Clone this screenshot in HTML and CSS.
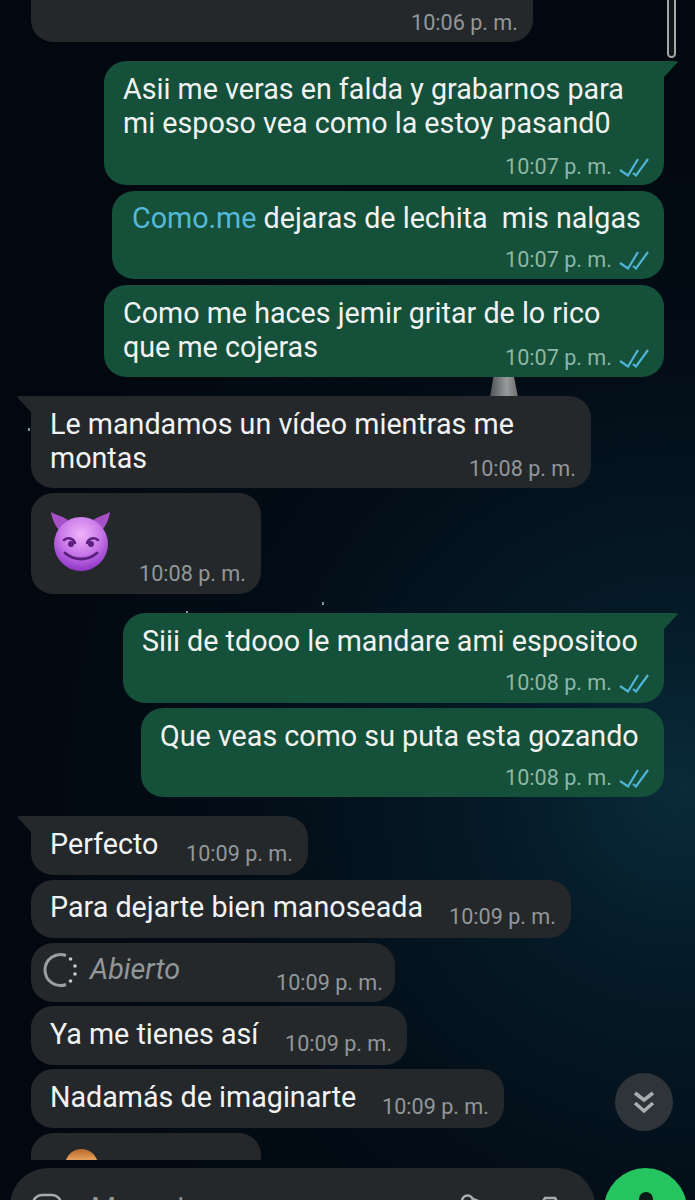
FILE: index.html
```html
<!DOCTYPE html>
<html lang="es">
<head>
    <meta charset="UTF-8">
    <meta name="viewport" content="width=device-width, initial-scale=1.0">
    <title>Chat</title>
    <link rel="stylesheet" href="styles.css">
</head>
<body>
    <!-- fondo -->
    <div class="moon"></div>
    <span class="star s1"></span>
    <span class="star s2"></span>
    <span class="star s3"></span>

    <div class="scroll-thumb"></div>

    <main class="chat">
        <div class="msg in cut w-502">
            <div class="meta">10:06 p. m.</div>
        </div>

        <div class="msg out tail group w-560 low-time">
            <p class="text">Asii me veras en falda y grabarnos para<br>mi esposo vea como la estoy pasand0</p>
            <div class="meta stacked">10:07 p. m. <svg class="ticks" viewBox="0 0 30 20"><path d="M1 13l8 5.500L19 2M14 16l3 2.500L29 2"/></svg></div>
        </div>
        <div class="msg out w-552 pad-20">
            <p class="text"><span class="link">Como.me</span> dejaras de lechita&nbsp; mis nalgas</p>
            <div class="meta stacked">10:07 p. m. <svg class="ticks" viewBox="0 0 30 20"><path d="M1 13l8 5.500L19 2M14 16l3 2.500L29 2"/></svg></div>
        </div>
        <div class="msg out w-560 short">
            <p class="text">Como me haces jemir gritar de lo rico<br>que me cojeras</p>
            <div class="meta overlap">10:07 p. m. <svg class="ticks" viewBox="0 0 30 20"><path d="M1 13l8 5.500L19 2M14 16l3 2.500L29 2"/></svg></div>
        </div>

        <div class="msg in tail group w-560 short">
            <p class="text">Le mandamos un vídeo mientras me<br>montas</p>
            <div class="meta overlap">10:08 p. m.</div>
        </div>
        <div class="msg in w-230 emoji-msg">
            <svg class="devil" viewBox="0 0 60 60">
                <defs>
                    <radialGradient id="face" cx="50%" cy="32%" r="68%">
                        <stop offset="0" stop-color="#f0b4fa"/>
                        <stop offset="0.55" stop-color="#c878e8"/>
                        <stop offset="1" stop-color="#8f35c8"/>
                    </radialGradient>
                </defs>
                <path d="M0 0c5 3 11 4 17 8l-8 11C4 14 1 7 0 0zM59 0c-5 3-11 4-17 8l8 11c5-5 8-12 9-19z" fill="#a650c8"/>
                <circle cx="30" cy="32" r="27" fill="url(#face)"/>
                <path d="M13 28c4-3 9-2 11 3M47 28c-4-3-9-2-11 3" fill="none" stroke="#5c1f80" stroke-width="2.500" stroke-linecap="round"/>
                <circle cx="20" cy="32" r="3" fill="#5c1f80"/>
                <circle cx="40" cy="32" r="3" fill="#5c1f80"/>
                <path d="M14 41c9 8 23 8 32 0" fill="none" stroke="#5c1f80" stroke-width="3" stroke-linecap="round"/>
            </svg>
            <div class="meta emoji-time">10:08 p. m.</div>
        </div>

        <div class="msg out tail group w-541">
            <p class="text">Siii de tdooo le mandare ami espositoo</p>
            <div class="meta stacked">10:08 p. m. <svg class="ticks" viewBox="0 0 30 20"><path d="M1 13l8 5.500L19 2M14 16l3 2.500L29 2"/></svg></div>
        </div>
        <div class="msg out w-523 close short">
            <p class="text">Que veas como su puta esta gozando</p>
            <div class="meta stacked">10:08 p. m. <svg class="ticks" viewBox="0 0 30 20"><path d="M1 13l8 5.500L19 2M14 16l3 2.500L29 2"/></svg></div>
        </div>

        <div class="msg in tail group row w-277">
            <p class="text">Perfecto</p>
            <div class="meta">10:09 p. m.</div>
        </div>
        <div class="msg in row w-540 h-58">
            <p class="text">Para dejarte bien manoseada</p>
            <div class="meta">10:09 p. m.</div>
        </div>
        <div class="msg in row w-364 once">
            <svg class="once-icon" viewBox="0 0 36 36">
                <path d="M24 3.500A15.500 15.500 0 1 0 24 32.500" fill="none" stroke="#9a9fa2" stroke-width="3"/>
                <circle cx="28.500" cy="7" r="1.800" fill="#c8cbcd"/>
                <circle cx="33" cy="14" r="1.800" fill="#c8cbcd"/>
                <circle cx="33" cy="22" r="1.800" fill="#c8cbcd"/>
                <circle cx="28.500" cy="29" r="1.800" fill="#c8cbcd"/>
            </svg>
            <p class="text opened">Abierto</p>
            <div class="meta">10:09 p. m.</div>
        </div>
        <div class="msg in row tight w-376">
            <p class="text">Ya me tienes así</p>
            <div class="meta">10:09 p. m.</div>
        </div>
        <div class="msg in row tight w-473">
            <p class="text">Nadamás de imaginarte</p>
            <div class="meta">10:09 p. m.</div>
        </div>
        <div class="msg in w-230 peek">
            <div class="peek-emoji"></div>
        </div>
    </main>

    <button class="to-bottom">
        <svg viewBox="0 0 22 24"><path d="M2 3l9 7 9-7M2 13l9 8 9-8"/></svg>
    </button>

    <footer class="bar">
        <div class="composer">
            <svg class="bar-icon smile" viewBox="0 0 32 32"><rect x="2" y="2" width="28" height="28" rx="9"/></svg>
            <span class="placeholder">Mensaje</span>
            <svg class="bar-icon clip" viewBox="0 0 24 32"><path d="M5 24L6 8a5.500 5.500 0 0 1 11 0l-1 16M17 6l5 2"/></svg>
            <svg class="bar-icon camera" viewBox="0 0 36 30"><path d="M2 8h8l3-5h10l3 5h8v20H2z"/></svg>
        </div>
        <div class="mic">
            <span class="mic-head"></span>
        </div>
    </footer>
</body>
</html>
```

FILE: styles.css
```css
* {
    margin: 0;
    padding: 0;
    box-sizing: border-box;
}

html, body {
    height: 1200px;
    overflow: hidden;
}

body {
    position: relative;
    font-family: Roboto, Arial, sans-serif;
    color: #f1f3f2;
    background: radial-gradient(circle at 680px 790px, #0a2b3a 0, #051b28 170px, #030d17 430px, #02080f 700px);
}

/* estrellas y luna del fondo */
.moon {
    position: absolute;
    left: 490px;
    top: 377px;
    width: 28px;
    height: 20px;
    background: linear-gradient(to right, #505356, #989a9b 60%, #6a6c6e);
    clip-path: polygon(12% 0, 86% 0, 100% 100%, 0 100%);
}

.star {
    position: absolute;
    width: 2px;
    height: 3px;
    background: #7f99a4;
}

.s1 { left: 28px; top: 428px; }
.s2 { left: 322px; top: 602px; }
.s3 { left: 186px; top: 611px; width: 2px; height: 2px; }

.scroll-thumb {
    position: absolute;
    left: 667px;
    top: -6px;
    width: 9px;
    height: 64px;
    border: 2px solid #a5a8aa;
    border-radius: 5px;
    background: #11161a;
}

.chat {
    display: flex;
    flex-direction: column;
    height: 1160px;
    overflow: hidden;
}

.msg {
    position: relative;
    flex-shrink: 0;
    margin-top: 5px;
    padding: 11px 23px 8px 19px;
    border-radius: 22px;
}

.in {
    align-self: flex-start;
    margin-left: 31px;
    background: #24282b;
}

.out {
    align-self: flex-end;
    margin-right: 31px;
    background: #15503a;
}

.out + .out {
    margin-top: 6px;
}

.out + .out.close {
    margin-top: 5px;
}

.msg.group {
    margin-top: 19px;
}

.msg.tight {
    margin-top: 4px;
}

.short {
    padding-bottom: 7px;
}

.cut {
    height: 42px;
    margin-top: 0;
    padding: 11px 15px 0 0;
    border-radius: 0 0 22px 22px;
}

/* colita de la burbuja */
.tail.out {
    border-top-right-radius: 0;
}

.tail.in {
    border-top-left-radius: 0;
}

.tail::after {
    content: "";
    position: absolute;
    top: 0;
    width: 14px;
    height: 16px;
    background: inherit;
}

.tail.out::after {
    left: 100%;
    clip-path: polygon(0 0, 85% 0, 100% 6%, 0 100%);
}

.tail.in::after {
    right: 100%;
    clip-path: polygon(100% 0, 15% 0, 0 6%, 100% 100%);
}

.w-230 { width: 230px; }
.w-277 { width: 277px; }
.w-364 { width: 364px; }
.w-376 { width: 376px; }
.w-473 { width: 473px; }
.w-502 { width: 502px; }
.w-523 { width: 523px; }
.w-540 { width: 540px; }
.w-541 { width: 541px; }
.w-552 { width: 552px; }
.w-560 { width: 560px; }

.pad-20 {
    padding: 10px 23px 7px 20px;
}

.text {
    font-size: 28.700px;
    line-height: 34px;
    white-space: nowrap;
}

.link {
    color: #56b9d8;
}

.meta {
    display: flex;
    align-items: center;
    justify-content: flex-end;
    gap: 7px;
    height: 24px;
    font-size: 21.600px;
    line-height: 24px;
    white-space: nowrap;
    color: #92979a;
}

.out .meta {
    color: #8eb7a6;
    margin-right: -8px;
}

.meta.stacked {
    margin-top: 13px;
}

.low-time {
    padding-bottom: 6px;
}

.low-time .meta.stacked {
    margin-top: 15px;
}

.meta.overlap {
    margin-top: -18px;
}

.in .meta.overlap {
    margin-right: -8px;
}

.ticks {
    width: 30px;
    height: 20px;
    flex-shrink: 0;
    fill: none;
    stroke: #4fb4d6;
    stroke-width: 2.2;
}

/* filas con la hora a la derecha */
.row {
    display: flex;
    justify-content: space-between;
    height: 59px;
    padding-right: 15px;
    padding-bottom: 0;
}

.h-58 {
    height: 58px;
    padding-top: 10px;
}

.h-58 .meta {
    margin-top: 16px;
}

.row .meta {
    margin-top: 15px;
}

.emoji-msg {
    height: 101px;
    padding: 19px 15px 0 20px;
}

.devil {
    display: block;
    width: 60px;
    height: 60px;
}

.emoji-time {
    margin-top: -10px;
}

.once {
    padding-left: 11px;
    padding-top: 9px;
    padding-right: 12px;
}

.once-icon {
    width: 36px;
    height: 36px;
    flex-shrink: 0;
}

.opened {
    flex: 1;
    margin-left: 12px;
    font-style: italic;
    color: #92979a;
}

.once .meta {
    margin-top: 19px;
}

.peek {
    height: 60px;
    padding: 16px 0 0 34px;
}

.peek-emoji {
    width: 33px;
    height: 33px;
    border-radius: 50%;
    background: linear-gradient(#b5672c, #e9a560 35%);
}

.to-bottom {
    position: absolute;
    left: 615px;
    top: 1073px;
    display: flex;
    align-items: center;
    justify-content: center;
    width: 58px;
    height: 58px;
    border: none;
    border-radius: 50%;
    background: #2e3438;
}

.to-bottom svg {
    width: 22px;
    height: 24px;
    fill: none;
    stroke: #a8aeb0;
    stroke-width: 3.5;
}

.bar {
    display: flex;
    gap: 9px;
    margin: 8px 0 0 10px;
}

.composer {
    display: flex;
    align-items: flex-start;
    width: 585px;
    height: 80px;
    padding: 25px 27px 0 21px;
    border-radius: 38px;
    background: #24282b;
}

.bar-icon {
    flex-shrink: 0;
    fill: none;
    stroke: #a9adaf;
    stroke-width: 2.5;
}

.smile {
    width: 32px;
    height: 32px;
}

.placeholder {
    flex: 1;
    margin: -2px 0 0 28px;
    font-size: 28.700px;
    line-height: 34px;
    color: #92979a;
}

.clip {
    width: 24px;
    height: 32px;
    margin-right: 52px;
}

.camera {
    width: 36px;
    height: 30px;
    margin-top: 2px;
}

.mic {
    display: flex;
    justify-content: center;
    width: 83px;
    height: 83px;
    padding-top: 24px;
    border-radius: 50%;
    background: #25c45f;
}

.mic-head {
    width: 14px;
    height: 30px;
    border-radius: 7px;
    background: #0b1a14;
}
```
